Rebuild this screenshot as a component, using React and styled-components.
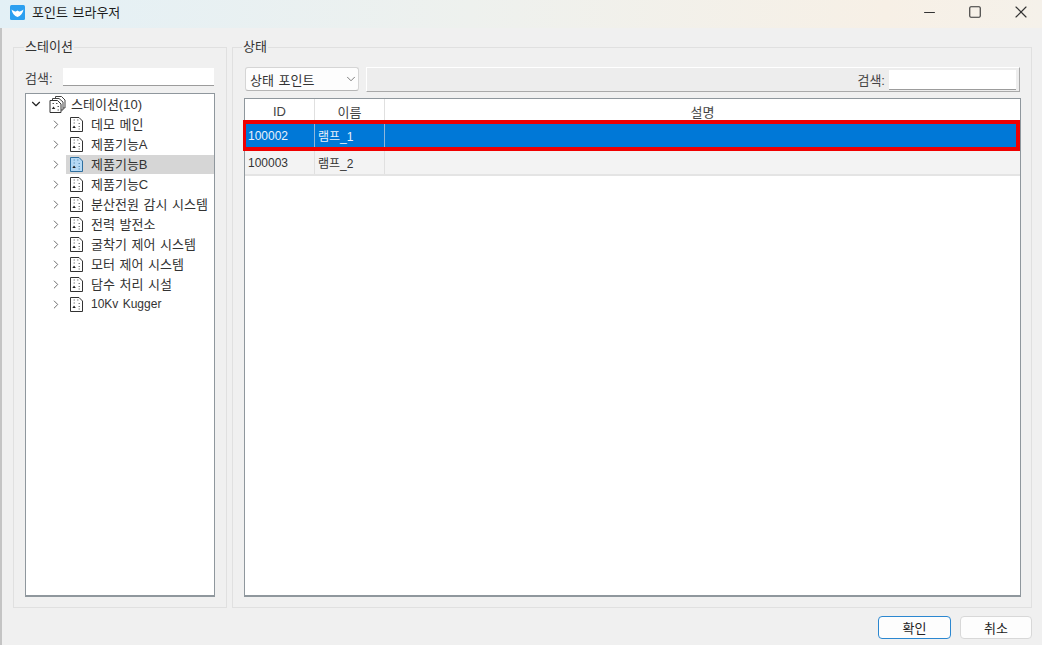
import React from "react";
import styled, { createGlobalStyle } from "styled-components";
import { ChevronDown, ChevronRight, Minus, Square, X } from "lucide-react";

const GlobalStyle = createGlobalStyle`
  html, body {
    margin: 0;
    padding: 0;
    background: #f0f0f0;
  }
  * {
    box-sizing: border-box;
  }
`;

const Window = styled.div`
  width: 1042px;
  height: 645px;
  display: flex;
  flex-direction: column;
  overflow: hidden;
  background: #f0f0f0;
  color: #222;
  font-family: "Liberation Sans", "Noto Sans CJK KR", sans-serif;
  font-size: 13px;
  word-spacing: 1px;
`;

const TitleBar = styled.div`
  height: 28px;
  flex: none;
  display: flex;
  align-items: center;
  padding: 0 0 4px 10px;
  background: linear-gradient(90deg, #e3f0f6 0%, #eef1ee 45%, #f7f0e6 85%, #f5f1ea 100%);
`;

const TitleText = styled.span`
  margin-left: 7px;
  padding-bottom: 1px;
  color: #1c1c1c;
`;

const WindowControls = styled.div`
  margin-left: auto;
  margin-right: -2px;
  display: flex;
  color: #333;
`;

const ControlButton = styled.span`
  width: 46px;
  display: flex;
  justify-content: center;
  align-items: center;
`;

const Content = styled.div`
  flex: 1;
  display: flex;
  flex-direction: column;
  border-left: 2px solid #c4c4c4;
  padding: 19px 10px 0 11px;
  min-height: 0;
`;

const Panels = styled.div`
  height: 561px;
  flex: none;
  display: flex;
  gap: 5px;
`;

const Group = styled.section`
  position: relative;
  width: ${(p) => p.$width}px;
  height: 100%;
  border: 1px solid #e0e0e0;
  padding: ${(p) => p.$padding};
  display: flex;
  flex-direction: column;
`;

const Legend = styled.span`
  position: absolute;
  top: -9px;
  left: ${(p) => p.$left}px;
  background: #f0f0f0;
  padding: 0 1px;
  line-height: 16px;
  color: #333;
`;

const SearchRow = styled.div`
  height: 18px;
  flex: none;
  display: flex;
  align-items: center;
  margin-bottom: 7px;
`;

const SearchLabel = styled.label`
  width: 38px;
  color: #444;
`;

const SearchInput = styled.div`
  width: ${(p) => p.$width}px;
  height: ${(p) => p.$height}px;
  background: #fff;
  border-bottom: 1px solid #9c9c9c;
`;

const TreeBox = styled.div`
  width: 190px;
  flex: 1;
  background: #fff;
  border: 1px solid #8f979d;
  border-bottom-width: 2px;
`;

const TreeRow = styled.div`
  height: 20px;
  display: flex;
  align-items: center;
  padding-left: ${(p) => (p.$root ? 3 : 23)}px;
  color: #333;
`;

const Arrow = styled.span`
  width: 14px;
  flex: none;
  display: flex;
  justify-content: center;
  color: ${(p) => (p.$root ? "#222" : "#666")};
`;

const RowBody = styled.div`
  flex: 1;
  height: ${(p) => (p.$selected ? 19 : 20)}px;
  display: flex;
  align-items: center;
  margin-left: ${(p) => (p.$root ? 4 : 3)}px;
  padding-left: ${(p) => (p.$root ? 2 : 4)}px;
  background: ${(p) => (p.$selected ? "#d6d6d6" : "transparent")};
`;

const RowLabel = styled.span`
  margin-left: ${(p) => (p.$root ? 5 : 8)}px;
  padding-bottom: ${(p) => (p.$latin ? 0 : 2)}px;
  white-space: nowrap;
  font-size: ${(p) => (p.$latin ? 12 : 13)}px;
`;

const Toolbar = styled.div`
  height: 25px;
  flex: none;
  display: flex;
  gap: 7px;
  margin-bottom: 6px;
  padding-left: 1px;
`;

const Combo = styled.div`
  width: 114px;
  height: 24px;
  display: flex;
  align-items: center;
  justify-content: space-between;
  padding: 0 0 0 4px;
  background: #fdfdfd;
  border: 1px solid #d5d5d5;
  border-bottom-color: #b5b5b5;
  border-radius: 3px;
  color: #333;
`;

const ToolPanel = styled.div`
  width: 654px;
  height: 25px;
  display: flex;
  align-items: center;
  justify-content: flex-end;
  gap: 4px;
  padding-right: 3px;
  border: 1px solid #fff;
  border-right-color: #a9a9a9;
  border-bottom-color: #a9a9a9;
  background: #ededed;
  color: #444;
`;

const Table = styled.div`
  width: 777px;
  flex: 1;
  background: #fff;
  border: 1px solid #8f979d;
  border-bottom-width: 2px;
  display: flex;
  flex-direction: column;
`;

const Row = styled.div`
  display: grid;
  grid-template-columns: 70px 70px 1fr;
  height: ${(p) => p.$height}px;
  flex: none;
  background: ${(p) => p.$bg};
  color: #333;
  font-size: 12px;
`;

const SelectedRow = styled(Row)`
  position: relative;
  z-index: 1;
  margin-left: -2px;
  grid-template-columns: 69px 70px 1fr;
  border: 4px solid #f00000;
  border-width: 4px 4px 4px 3px;
  color: #e8f2fb;
`;

const PlainRow = styled(Row)`
  border-bottom: 2px solid #e4e4e4;
`;

const HeadCell = styled.div`
  display: flex;
  align-items: center;
  justify-content: center;
  padding-top: 3px;
  border-right: 1px solid #e0e0e0;
  color: #444;
  font-size: 13px;
  &:last-child {
    border-right: none;
  }
`;

const Cell = styled.div`
  display: flex;
  align-items: center;
  padding-left: ${(p) => p.$inset}px;
  border-right: 1px solid ${(p) => p.$line};
  &:last-child {
    border-right: none;
  }
`;

const Footer = styled.div`
  flex: 1;
  display: flex;
  justify-content: flex-end;
  align-items: flex-start;
  gap: 9px;
  padding-top: 8px;
`;

const Button = styled.button`
  width: ${(p) => p.$width}px;
  height: 23px;
  padding: 0;
  font: inherit;
  color: #222;
  background: #fdfdfd;
  border: ${(p) => (p.$primary ? "1px solid #2b87d0" : "1px solid #d8d8d8")};
  border-radius: 4px;
`;

const AppLogo = () => (
  <svg width="15" height="15" viewBox="0 0 15 15">
    <rect width="15" height="15" rx="1.5" fill="#2b9ff0" />
    <path d="M1.5 4.5 C3.5 6 5 6.5 5.8 6.5 L7.5 5.4 L9.2 6.5 C10 6.5 11.5 6 13.5 4.5 C13 8 10.5 11 7.5 12 C4.5 11 2 8 1.5 4.5 Z" fill="#fff" />
  </svg>
);

const PageIcon = ({ fill = "#fff", stroke = "#333" }) => (
  <svg width="13" height="15" viewBox="0 0 13 15">
    <path d="M.5 .5H9L12.5 4V14.5H.5Z" fill={fill} stroke={stroke} />
    <path d="M3.5 3h1.5M7 3h1.5M3.5 6h1.5M8.5 6.5h1.5M8.5 9.5h1.5M8.5 12h1.5" stroke={stroke} opacity="0.6" />
    <path d="M4 8.5l1.8 2.6H2.4z" fill="#222" />
  </svg>
);

const StackIcon = () => (
  <svg width="17" height="17" viewBox="0 0 17 17">
    <path d="M6.5 2.5V.5H12.5L16 4V12H14" fill="#fff" stroke="#444" />
    <path d="M3.5 4.5V2.5H10L14 6V14H12" fill="#fff" stroke="#444" />
    <path d="M1 4.5H8.5L12 8V16.5H1Z" fill="#fff" stroke="#333" />
    <path d="M3.5 7.5h1.5M7 7.5h1.5M8.5 10.5h1.5M8.5 14h1.5" stroke="#555" />
    <path d="M4.5 10.5l1.8 2.6H2.8z" fill="#222" />
  </svg>
);

const stations = [
  "데모 메인",
  "제품기능A",
  "제품기능B",
  "제품기능C",
  "분산전원 감시 시스템",
  "전력 발전소",
  "굴착기 제어 시스템",
  "모터 제어 시스템",
  "담수 처리 시설",
  "10Kv Kugger",
];

const points = [
  { id: "100002", name: "램프_1", selected: true },
  { id: "100003", name: "램프_2", selected: false },
];

export default function App() {
  return (
    <Window>
      <GlobalStyle />
      <TitleBar>
        <AppLogo />
        <TitleText>포인트 브라우저</TitleText>
        <WindowControls>
          <ControlButton>
            <Minus size={17} strokeWidth={1.5} />
          </ControlButton>
          <ControlButton>
            <Square size={14} strokeWidth={1.9} />
          </ControlButton>
          <ControlButton>
            <X size={20} strokeWidth={1.4} />
          </ControlButton>
        </WindowControls>
      </TitleBar>
      <Content>
        <Panels>
          <Group $width={214} $padding="20px 11px 10px 11px">
            <Legend $left={10}>스테이션</Legend>
            <SearchRow>
              <SearchLabel>검색:</SearchLabel>
              <SearchInput $width={151} $height={18} />
            </SearchRow>
            <TreeBox>
              <TreeRow $root>
                <Arrow $root>
                  <ChevronDown size={16} strokeWidth={2} />
                </Arrow>
                <RowBody $root>
                  <StackIcon />
                  <RowLabel $root>스테이션(10)</RowLabel>
                </RowBody>
              </TreeRow>
              {stations.map((name) => {
                const selected = name === "제품기능B";
                return (
                  <TreeRow key={name}>
                    <Arrow>
                      <ChevronRight size={17} strokeWidth={1.6} />
                    </Arrow>
                    <RowBody $selected={selected}>
                      <PageIcon fill={selected ? "#b5d9f5" : "#fff"} stroke={selected ? "#2f6f9f" : "#333"} />
                      <RowLabel $latin={name === "10Kv Kugger"}>{name}</RowLabel>
                    </RowBody>
                  </TreeRow>
                );
              })}
            </TreeBox>
          </Group>
          <Group $width={800} $padding="19px 10px 10px 11px">
            <Legend $left={9}>상태</Legend>
            <Toolbar>
              <Combo>
                상태 포인트
                <ChevronDown size={14} strokeWidth={1.3} color="#555" />
              </Combo>
              <ToolPanel>
                검색:
                <SearchInput $width={127} $height={20} />
              </ToolPanel>
            </Toolbar>
            <Table>
              <Row $height={21} $bg="#fff">
                <HeadCell>ID</HeadCell>
                <HeadCell>이름</HeadCell>
                <HeadCell>설명</HeadCell>
              </Row>
              {points.map((point) =>
                point.selected ? (
                  <SelectedRow key={point.id} $height={31} $bg="#0078d7">
                    <Cell $inset={2} $line="#8db6dc">{point.id}</Cell>
                    <Cell $inset={3} $line="#8db6dc">{point.name}</Cell>
                    <Cell $inset={3} $line="#8db6dc" />
                  </SelectedRow>
                ) : (
                  <PlainRow key={point.id} $height={25} $bg="#f3f3f3">
                    <Cell $inset={3} $line="#e0e0e0">{point.id}</Cell>
                    <Cell $inset={3} $line="#e0e0e0">{point.name}</Cell>
                    <Cell $inset={3} $line="#e0e0e0" />
                  </PlainRow>
                )
              )}
            </Table>
          </Group>
        </Panels>
        <Footer>
          <Button $width={73} $primary>
            확인
          </Button>
          <Button $width={72}>취소</Button>
        </Footer>
      </Content>
    </Window>
  );
}
